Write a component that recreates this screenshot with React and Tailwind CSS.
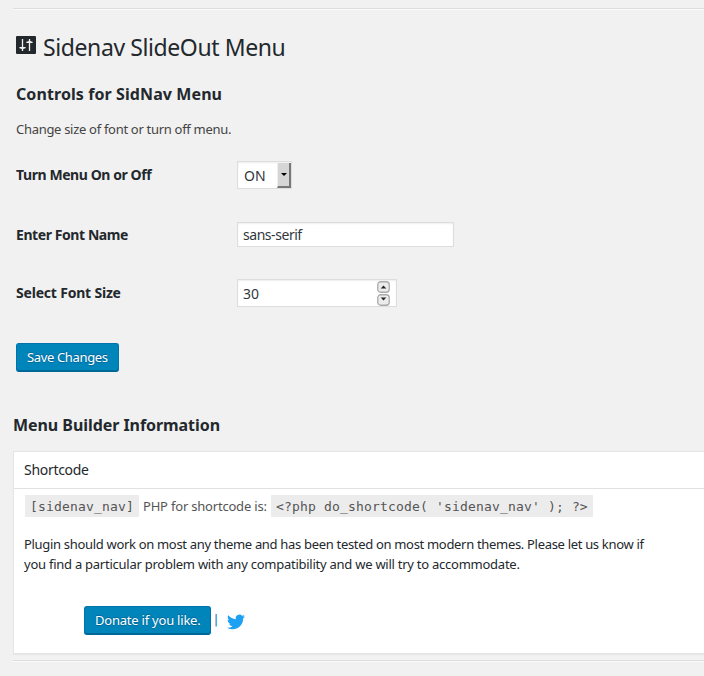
function SlidersIcon() {
  return (
    <svg width="20" height="18" viewBox="0 0 20 18" className="block">
      <rect width="20" height="18" rx="1" fill="#23282d" />
      <path d="M6.5 3v12M13.5 3v12" stroke="#f1f1f1" strokeWidth="1.3" />
      <path d="M3.4 10.9h6.2v1.3l-2 .6-1.1 1-1.1-1-2-.6zM10.4 7.1h6.2V5.8l-2-.6-1.1-1-1.1 1-2 .6z" fill="#f1f1f1" />
    </svg>
  );
}

function TwitterIcon() {
  return (
    <svg width="18" height="18" viewBox="0 0 24 24" fill="#1da1f2" className="block">
      <path d="M23.95 4.57a10 10 0 0 1-2.82.77 4.96 4.96 0 0 0 2.16-2.72c-.95.55-2 .95-3.13 1.18a4.92 4.92 0 0 0-8.38 4.48C7.69 8.1 4.07 6.13 1.64 3.16a4.82 4.82 0 0 0-.67 2.48c0 1.71.87 3.21 2.19 4.1a4.9 4.9 0 0 1-2.23-.62v.06a4.92 4.92 0 0 0 3.95 4.83 5 5 0 0 1-2.21.08 4.94 4.94 0 0 0 4.6 3.42A9.87 9.87 0 0 1 0 19.54a14 14 0 0 0 7.55 2.21c9.05 0 14-7.5 14-13.98 0-.21 0-.42-.02-.63a9.94 9.94 0 0 0 2.42-2.57z" />
    </svg>
  );
}

function Spin({ up }) {
  return (
    <svg width="13" height="12" viewBox="0 0 13 12" className="block">
      <rect x=".75" y=".75" width="11.5" height="10.5" rx="3" fill="#ececec" stroke="#aaaaaa" strokeWidth="1.3" />
      <path d={up ? "M3.7 7.6h5.6L6.5 4.6z" : "M3.7 3.4h5.6L6.5 6.4z"} fill="#222" />
    </svg>
  );
}

function Button({ children, className }) {
  return (
    <button className={`block h-[29px] rounded-[3px] border border-[#0073aa] border-b-[#006799] bg-[#0085ba] pb-px text-left text-[13px] leading-[26px] whitespace-nowrap text-white shadow-[inset_0_-1px_0_#006799] [text-shadow:0_-1px_1px_#006799,0_1px_1px_#006799] ${className}`}>
      {children}
    </button>
  );
}

export default function App() {
  return (
    <div className="h-[676px] w-[704px] overflow-hidden bg-[#f1f1f1] pl-[13px] font-['Noto_Sans','Open_Sans',sans-serif] text-[#23282d]">
      <div className="mt-2 h-[2px] border-t border-b border-t-[#dddddd] border-b-[#fafafa]" />
      <main className="pl-[3px] whitespace-nowrap">
        <h1 className="mt-[23px] flex h-[28px] items-start text-[23px] leading-[28px]">
          <span className="mt-[3px] mr-[7px]"><SlidersIcon /></span>
          <span className="tracking-[-0.4px]">Sidenav SlideOut Menu</span>
        </h1>
        <h2 className="mt-[21px] h-[24px] text-[16px] leading-[24px] font-bold tracking-[0.09px]">Controls for SidNav Menu</h2>
        <p className="mt-[13px] h-[20px] text-[13px] leading-[20px] tracking-[-0.3px] text-[#444444]">Change size of font or turn off menu.</p>
        <div className="mt-[21px] flex h-[30px] items-center">
          <label className="w-[221px] text-[14px] leading-[20px] font-bold tracking-[-0.42px]">Turn Menu On or Off</label>
          <div className="flex h-[28px] w-[55px] items-center border border-[#dddddd] bg-white text-[14px] text-[#32373c] shadow-[inset_0_1px_2px_rgba(0,0,0,0.07)]">
            <span className="w-[39px] pl-[6px]">ON</span>
            <span className="flex h-[25px] w-[14px] items-center justify-center border-r-2 border-b-2 border-l border-r-[#777] border-b-[#777] border-l-[#eee] bg-[#d6d6d6]">
              <svg width="6" height="3" viewBox="0 0 6 3"><path d="M0 0h6L3 3z" fill="#000" /></svg>
            </span>
          </div>
        </div>
        <div className="mt-[29px] flex h-[31px] items-center">
          <label className="w-[221px] text-[14px] leading-[20px] font-bold tracking-[-0.42px]">Enter Font Name</label>
          <div className="h-[25px] w-[217px] border border-[#dddddd] bg-white pl-[5px] text-[14px] leading-[23px] tracking-[-0.45px] text-[#32373c] shadow-[inset_0_1px_2px_rgba(0,0,0,0.07)]">sans-serif</div>
        </div>
        <div className="mt-[28px] flex h-[30px] items-center">
          <label className="w-[221px] text-[14px] leading-[20px] font-bold tracking-[-0.2px]">Select Font Size</label>
          <div className="flex h-[28px] w-[160px] items-center justify-between border border-[#dddddd] bg-white pr-[6px] pl-[5px] text-[14px] leading-[26px] text-[#32373c] shadow-[inset_0_1px_2px_rgba(0,0,0,0.07)]">
            <span className="pt-px">30</span>
            <span className="flex flex-col gap-px"><Spin up /><Spin /></span>
          </div>
        </div>
        <Button className="mt-[35px] w-[103px] pl-[10px] tracking-[-0.35px]">Save Changes</Button>
      </main>
      <h2 className="mt-[41px] h-[24px] text-[16px] leading-[24px] font-bold tracking-[-0.06px] whitespace-nowrap">Menu Builder Information</h2>
      <section className="mt-[14px] h-[203px] w-[720px] border border-[#e5e5e5] bg-white whitespace-nowrap shadow-[0_1px_1px_rgba(0,0,0,0.04)]">
        <h3 className="h-[37px] border-b border-[#e1e1e1] pl-[10px] text-[14px] leading-[36px] tracking-[-0.3px]">Shortcode</h3>
        <div className="mt-[6px] flex h-[22px] items-center pl-[11px] text-[13px] text-[#555555]">
          <code className="h-[22px] w-[114px] bg-[#ececec] pl-[5px] font-['DejaVu_Sans_Mono',monospace] text-[13px] leading-[23px] tracking-[0.17px]">[sidenav_nav]</code>
          <span className="w-[132px] pt-px pl-[4px] tracking-[-0.2px]">PHP for shortcode is:</span>
          <code className="h-[22px] w-[322px] bg-[#ececec] pl-[5px] font-['DejaVu_Sans_Mono',monospace] text-[13px] leading-[23px] tracking-[0.17px]">&lt;?php do_shortcode( 'sidenav_nav' ); ?&gt;</code>
        </div>
        <p className="mt-[17px] pl-[10px] text-[13px] leading-[20px]">
          <span className="block tracking-[-0.315px]">Plugin should work on most any theme and has been tested on most modern themes. Please let us know if</span>
          <span className="block tracking-[-0.25px]">you find a particular problem with any compatibility and we will try to accommodate.</span>
        </p>
        <div className="mt-[32px] flex h-[29px] items-center pl-[70px]">
          <Button className="w-[127px] pl-[10px] tracking-[-0.22px]">Donate if you like.</Button>
          <span className="w-[16px] pb-px pl-[3px] font-['DejaVu_Sans',sans-serif] text-[12px] leading-[20px] text-[#0073aa]">|</span>
          <span className="mt-[2px]"><TwitterIcon /></span>
        </div>
      </section>
      <div className="mt-[6px] h-[2px] border-t border-b border-t-[#dddddd] border-b-[#fafafa]" />
    </div>
  );
}
